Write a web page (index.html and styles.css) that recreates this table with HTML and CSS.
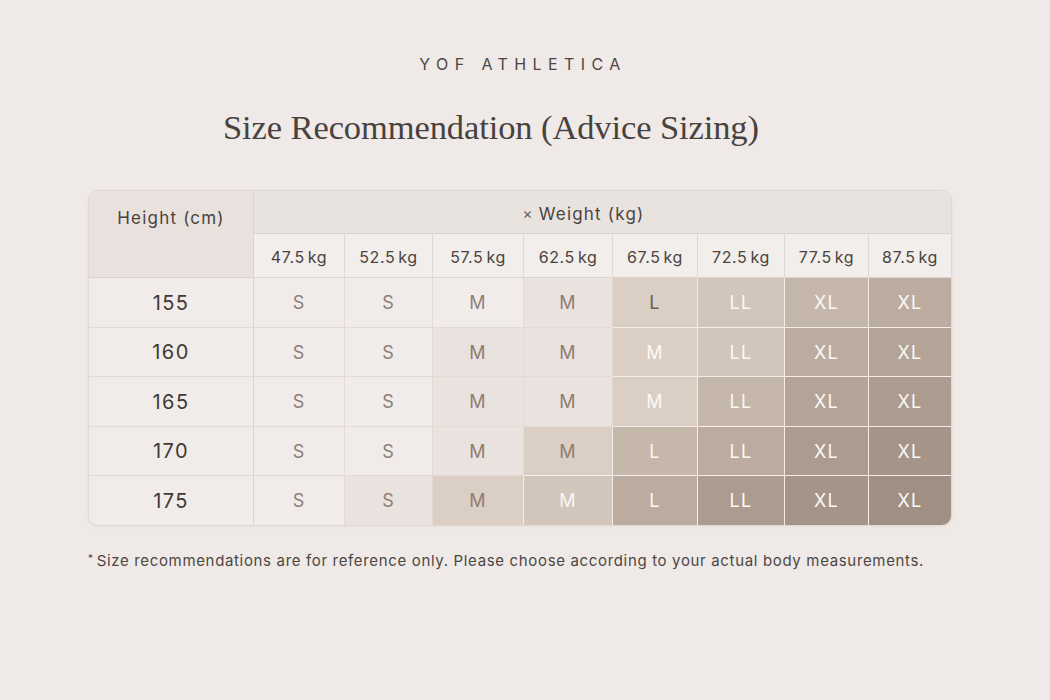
FILE: index.html
```html
<!DOCTYPE html>
<html lang="en">
<head>
<meta charset="utf-8">
<title>Size Recommendation</title>
<link rel="stylesheet" href="styles.css">
</head>
<body>
<main class="page">
  <div class="brand">YOF ATHLETICA</div>
  <h1 class="title">Size Recommendation (Advice Sizing)</h1>

  <div class="chart">
    <div class="grid">
      <div class="hd-height">Height (cm)</div>
      <div class="hd-weight"><span class="times">×</span> Weight (kg)</div>
      <div class="row head">
        <div class="wt">47.5<span class="u">kg</span></div>
        <div class="wt">52.5<span class="u">kg</span></div>
        <div class="wt">57.5<span class="u">kg</span></div>
        <div class="wt">62.5<span class="u">kg</span></div>
        <div class="wt">67.5<span class="u">kg</span></div>
        <div class="wt">72.5<span class="u">kg</span></div>
        <div class="wt">77.5<span class="u">kg</span></div>
        <div class="wt">87.5<span class="u">kg</span></div>
      </div>

      <div class="row">
        <div class="ht">155</div>
        <div class="c s0 tm">S</div><div class="c s0 tm">S</div><div class="c s0 tm">M</div><div class="c s1 tb">M</div>
        <div class="c s2 td">L</div><div class="c s3 tw">LL</div><div class="c s4 tw">XL</div><div class="c s5 tw">XL</div>
      </div>
      <div class="row">
        <div class="ht">160</div>
        <div class="c s0 tm">S</div><div class="c s0 tm">S</div><div class="c s1 tb">M</div><div class="c s1 tb">M</div>
        <div class="c s2 tw">M</div><div class="c s3 tw">LL</div><div class="c s5 tw">XL</div><div class="c s6 tw">XL</div>
      </div>
      <div class="row">
        <div class="ht">165</div>
        <div class="c s0 tm">S</div><div class="c s0 tm">S</div><div class="c s1 tb">M</div><div class="c s1 tb">M</div>
        <div class="c s2 tw">M</div><div class="c s4 tw">LL</div><div class="c s6 tw">XL</div><div class="c s7 tw">XL</div>
      </div>
      <div class="row">
        <div class="ht">170</div>
        <div class="c s0 tm">S</div><div class="c s0 tm">S</div><div class="c s1 tb">M</div><div class="c s2 tb">M</div>
        <div class="c s4 tw">L</div><div class="c s5 tw">LL</div><div class="c s7 tw">XL</div><div class="c s8 tw">XL</div>
      </div>
      <div class="row">
        <div class="ht">175</div>
        <div class="c s0 tm">S</div><div class="c s1 tb">S</div><div class="c s2 tb">M</div><div class="c s3 tw">M</div>
        <div class="c s5 tw">L</div><div class="c s7 tw">LL</div><div class="c s8 tw">XL</div><div class="c s9 tw">XL</div>
      </div>
    </div>
  </div>

  <p class="note"><span class="ast">*</span>Size recommendations are for reference only. Please choose according to your actual body measurements.</p>
</main>
</body>
</html>
```

FILE: styles.css
```css
* { box-sizing: border-box; }

html, body {
  margin: 0;
  padding: 0;
}

body {
  background: #efeae7;
  font-family: "Inter", "Open Sans", sans-serif;
  color: #4a4340;
  width: 1050px;
  height: 700px;
  overflow: hidden;
}

.page {
  width: 864px;
  margin-left: 88px;
  padding-top: 54px;
}

.brand {
  text-align: center;
  font-size: 16px;
  line-height: 20px;
  letter-spacing: 6.4px;
  color: #4d4744;
  padding-left: 6px;
}

.title {
  margin: 33px 0 0 0;
  padding-left: 135px;
  font-family: "Liberation Serif", "DejaVu Serif", serif;
  font-weight: 400;
  font-size: 34.5px;
  line-height: 40px;
  color: #48423f;
  letter-spacing: -0.1px;
}

.chart {
  margin-top: 43px;
  border: 1px solid #e0d8d3;
  border-radius: 10px;
  overflow: hidden;
  background: #f1ece9;
  box-shadow: 0 1px 3px rgba(120, 100, 90, 0.06);
}

.grid {
  display: grid;
  grid-template-columns: 165px 91px 88px 91px 89px 85px 87px 84px 82px;
  grid-template-rows: 43px 44px 50px 49px 50px 49px 49px;
}

.row { display: contents; }

.hd-height {
  grid-row: 1 / 3;
  grid-column: 1;
  background: #e8e1dd;
  border-right: 1px solid #ddd4cf;
  border-bottom: 1px solid #ddd4cf;
  text-align: center;
  padding-top: 17px;
  font-size: 17px;
  line-height: 20px;
  letter-spacing: 1.2px;
  color: #4a4340;
}

.hd-weight {
  grid-row: 1;
  grid-column: 2 / 10;
  background: #e9e3df;
  border-bottom: 1px solid #ddd4cf;
  display: flex;
  align-items: center;
  justify-content: center;
  padding-right: 38px;
  padding-top: 3px;
  font-size: 17px;
  letter-spacing: 1.2px;
  color: #4a4340;
}

.times {
  font-size: 15px;
  margin-right: 5px;
  color: #6a605b;
}

.wt {
  display: flex;
  align-items: center;
  justify-content: center;
  background: #f2eeeb;
  border-right: 1px solid #e0d8d3;
  border-bottom: 1px solid #ddd4cf;
  font-size: 16px;
  letter-spacing: 0.6px;
  color: #4a4340;
  padding-top: 3px;
}

.wt .u { margin-left: 3px; }

.ht {
  display: flex;
  align-items: center;
  justify-content: center;
  background: #f1ece9;
  border-right: 1px solid #ddd4cf;
  border-bottom: 1px solid #e2dad5;
  font-size: 20px;
  letter-spacing: 1.4px;
  color: #3f3936;
}

.c {
  display: flex;
  align-items: center;
  justify-content: center;
  font-size: 18px;
  letter-spacing: 1.2px;
  border-right: 1px solid #f3eeea;
  border-bottom: 1px solid #f3eeea;
}

.row > div:last-child { border-right: 0; }
.row:last-child > div { border-bottom: 0; }

.s0 { background: #f1ece9; border-color: #e2dad5; }
.s1 { background: #e9e2df; border-color: #e2dad5; }
.s2 { background: #dbcfc5; }
.s3 { background: #d2c5bb; }
.s4 { background: #c6b7ab; }
.s5 { background: #bcac9f; }
.s6 { background: #b4a397; }
.s7 { background: #ac9c90; }
.s8 { background: #a59488; }
.s9 { background: #a08f83; }

.tm { color: #8a807a; }
.tb { color: #8f7d71; }
.td { color: #6b5c52; }
.tw { color: #fbf8f5; }

.note {
  margin: 22px 0 0 0;
  font-size: 15px;
  line-height: 20px;
  letter-spacing: 0.66px;
  color: #4d4744;
}

.ast {
  font-size: 10px;
  vertical-align: 4px;
  margin-right: 3px;
}
```
